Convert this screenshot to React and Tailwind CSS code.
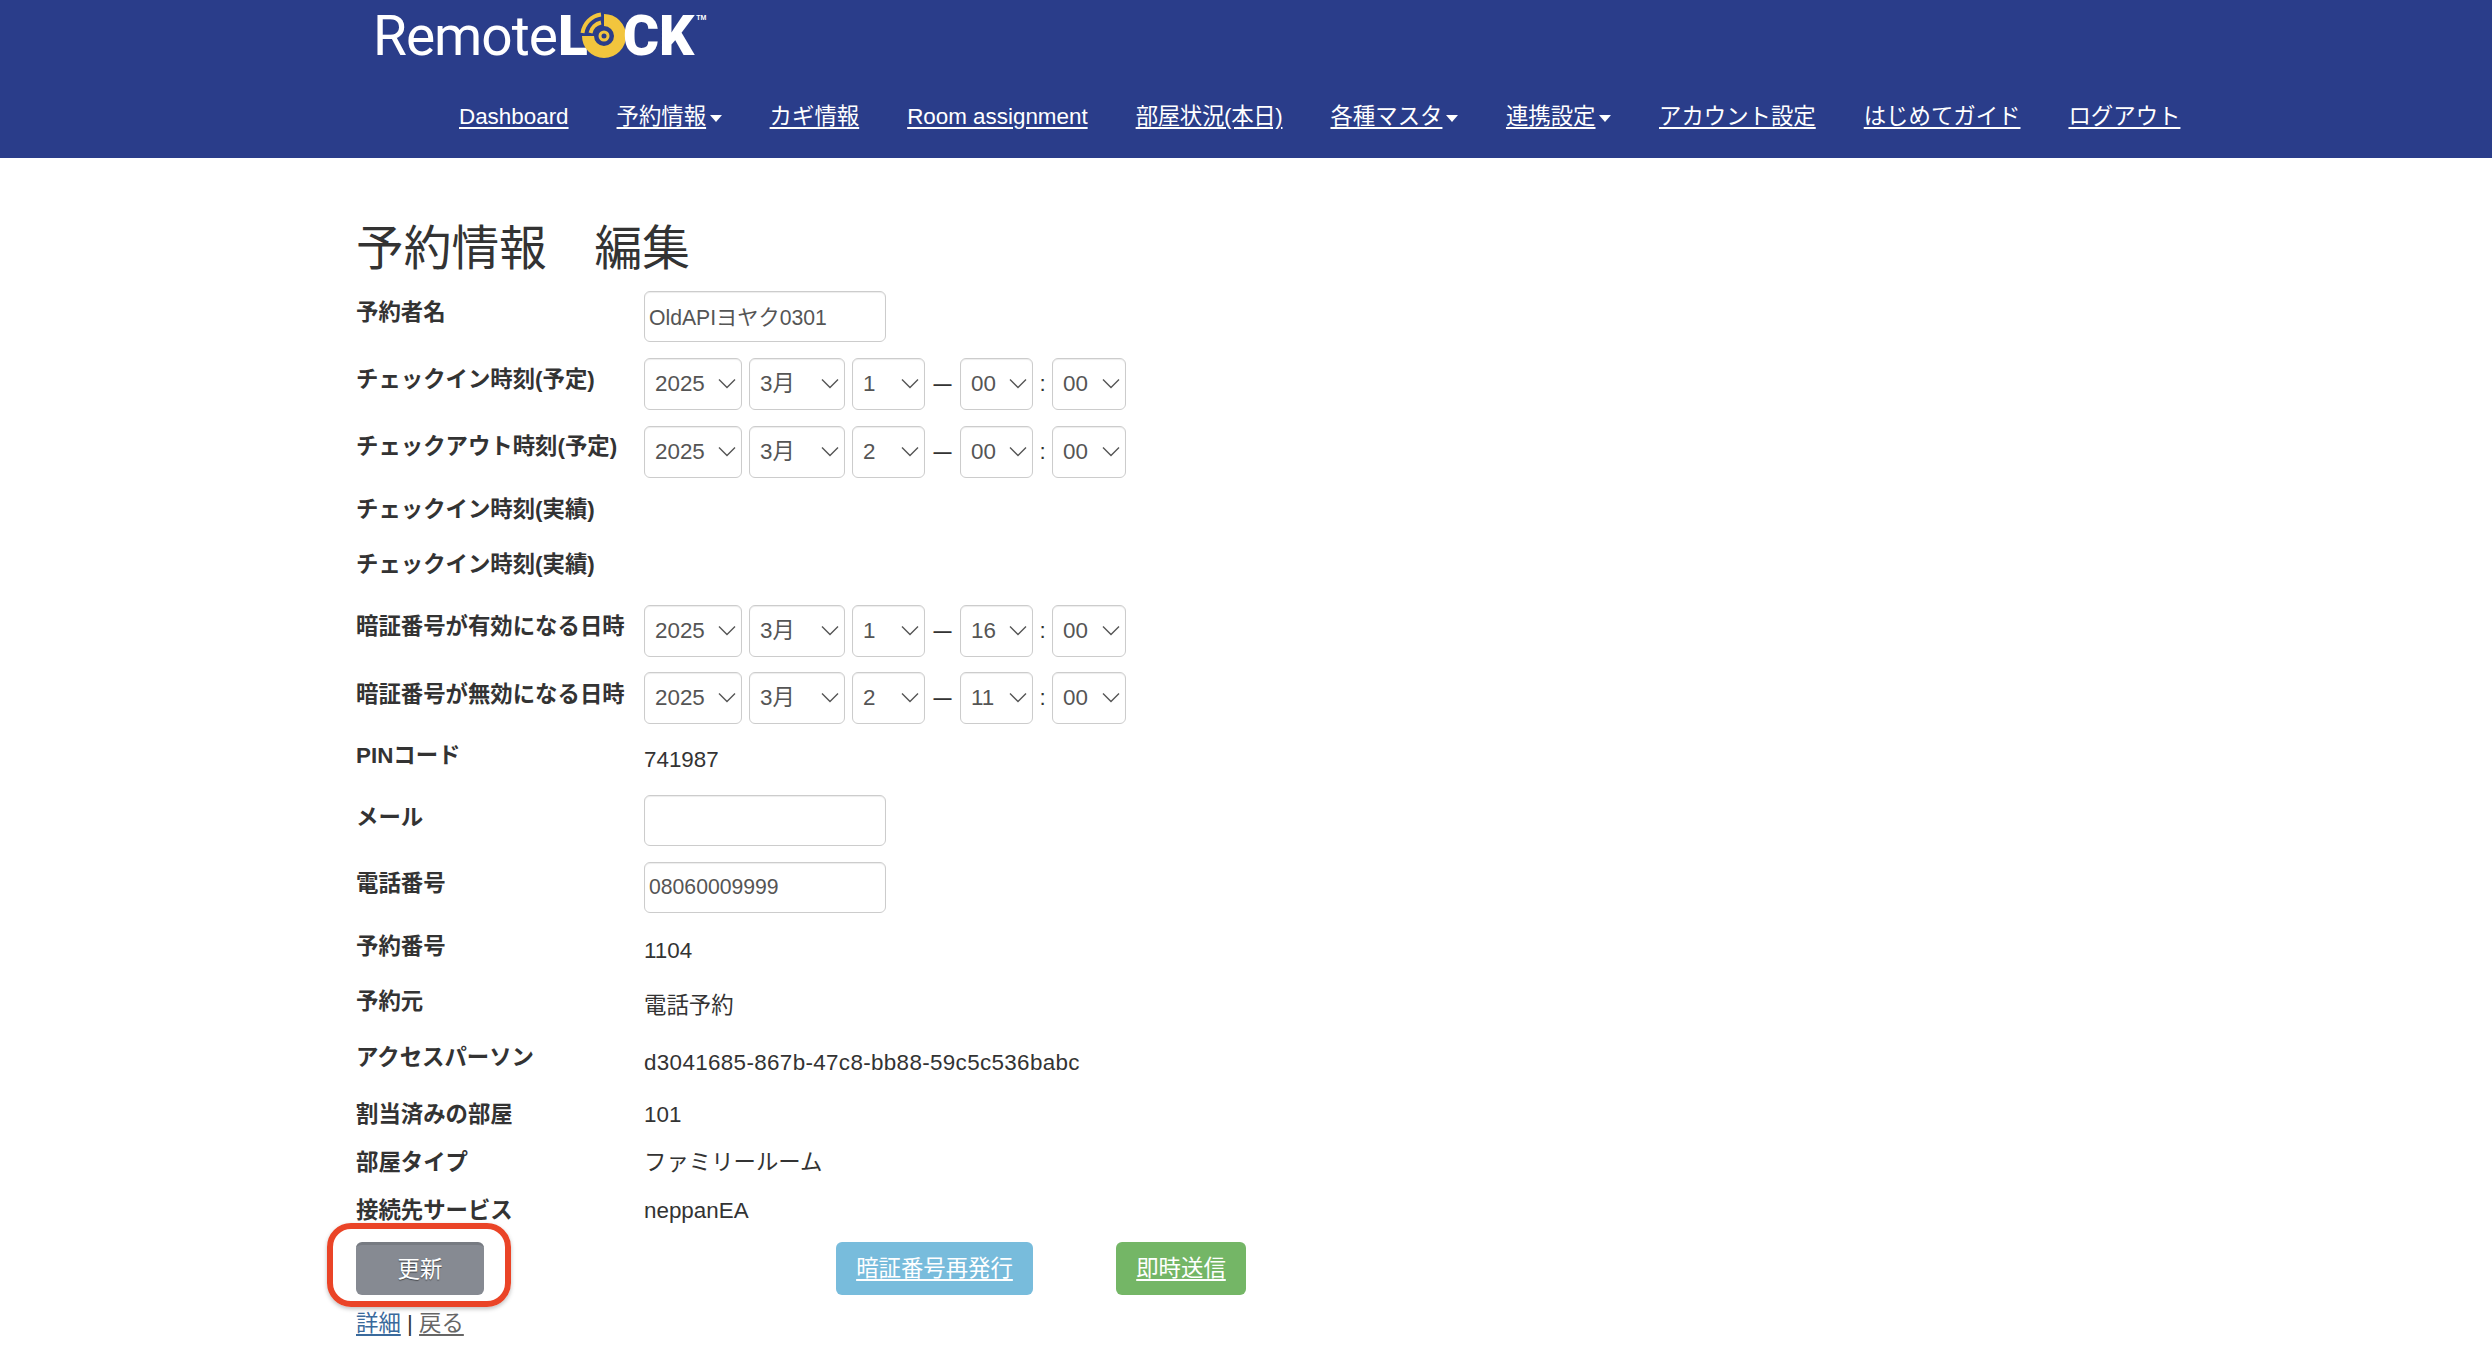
import React from "react";

const navItems = [
  { t: "Dashboard" },
  { t: "予約情報", c: true },
  { t: "カギ情報" },
  { t: "Room assignment" },
  { t: "部屋状況(本日)", k: "tracking-[-0.3px]" },
  { t: "各種マスタ", c: true },
  { t: "連携設定", c: true },
  { t: "アカウント設定" },
  { t: "はじめてガイド" },
  { t: "ログアウト" },
];

function Logo() {
  return (
    <div className="flex items-center h-[68px] pl-[373px] pt-[3px] text-white">
      <span className="[font-family:Roboto,sans-serif] text-[55px] leading-[68px] tracking-[-1px] font-normal w-[185px]">Remote</span>
      <span className="[font-family:Roboto,sans-serif] text-[55px] leading-[68px] font-black w-[21px]">L</span>
      <svg width="50" height="50" viewBox="0 0 50 50" className="shrink-0" fill="none" stroke="#f2c53d">
        <path d="M25 9A16 16 0 1 1 9 25" strokeWidth="12" />
        <path d="M3.5 22A21.5 21.5 0 0 1 22 3.5" strokeWidth="4" />
        <path d="M11.5 22A13.5 13.5 0 0 1 22 11.5" strokeWidth="4" />
        <circle cx="25" cy="25" r="4" strokeWidth="3" />
      </svg>
      <span className="[font-family:Roboto,sans-serif] text-[55px] leading-[68px] font-black -ml-[6px]">CK</span>
      <span className="self-start mt-[10px] ml-[2px] text-[7px] leading-[10px] font-bold">TM</span>
    </div>
  );
}

function Caret() {
  return <span className="inline-block ml-[3.5px] align-middle w-0 h-0 border-x-[6px] border-x-transparent border-t-[7px] border-t-white" />;
}

function Sel({ w, v }) {
  return (
    <div className={`relative h-[52px] ${w}`}>
      <select
        defaultValue={v}
        className="appearance-none w-full h-full bg-white border border-[#ccc] rounded-[6px] pl-[10px] text-[22.4px] text-[#555] shadow-[inset_0_1px_1px_rgba(0,0,0,0.075)]"
      >
        <option value={v}>{v}</option>
      </select>
      <svg className="absolute right-[6px] top-[20px] pointer-events-none" width="18" height="11" viewBox="0 0 18 11" fill="none" stroke="#555" strokeWidth="1.4">
        <path d="M1 1.5L9 9.5L17 1.5" />
      </svg>
    </div>
  );
}

function DateRow({ y, m, d, h, min }) {
  return (
    <div className="flex items-center text-[#333]">
      <Sel w="w-[98px]" v={y} />
      <div className="w-[7px]" />
      <Sel w="w-[96px]" v={m} />
      <div className="w-[7px]" />
      <Sel w="w-[73px]" v={d} />
      <span className="w-[35px] text-center text-[18px] font-bold">—</span>
      <Sel w="w-[73px]" v={h} />
      <span className="w-[19px] text-center text-[22.4px]">:</span>
      <Sel w="w-[74px]" v={min} />
    </div>
  );
}

function TextBox({ v }) {
  return (
    <input
      readOnly
      value={v}
      className="w-[242px] h-[51px] bg-white border border-[#ccc] rounded-[6px] px-[4px] pb-[2px] text-[21.2px] text-[#555] shadow-[inset_0_1px_1px_rgba(0,0,0,0.075)]"
    />
  );
}

function Label({ children, className = "" }) {
  return <div className={`w-[288px] shrink-0 font-bold leading-[32px] ${className}`}>{children}</div>;
}

export default function App() {
  return (
    <div className="h-[1346px] overflow-hidden bg-white text-[#333] text-[22.4px] [font-family:'Liberation_Sans','Noto_Sans_CJK_JP',sans-serif]">
      <header className="h-[158px] bg-[#2a3d8a]">
        <Logo />
        <nav className="flex gap-[48px] pl-[459px] pt-[32px] leading-[34px] text-white">
          {navItems.map((n) => (
            <span key={n.t} className="whitespace-nowrap">
              <a href="#" className={`underline underline-offset-[3px] ${n.k || ""}`}>{n.t}</a>
              {n.c && <Caret />}
            </span>
          ))}
        </nav>
      </header>

      <main className="pl-[356px]">
        <h1 className="mt-[61px] mb-[12px] text-[47.7px] leading-[60px] font-normal whitespace-pre">予約情報　編集</h1>

        <div className="flex h-[51px]">
          <Label className="pt-[6px] leading-[32px] box-content">予約者名</Label>
          <TextBox v="OldAPIヨヤク0301" />
        </div>
        <div className="flex mt-[16px]">
          <Label className="pt-[6px] box-content">チェックイン時刻(予定)</Label>
          <DateRow y="2025" m="3月" d="1" h="00" min="00" />
        </div>
        <div className="flex mt-[16px]">
          <Label className="pt-[5px] box-content">チェックアウト時刻(予定)</Label>
          <DateRow y="2025" m="3月" d="2" h="00" min="00" />
        </div>
        <div className="flex mt-[16px]">
          <Label>チェックイン時刻(実績)</Label>
        </div>
        <div className="flex mt-[23px]">
          <Label>チェックイン時刻(実績)</Label>
        </div>
        <div className="flex mt-[24px]">
          <Label className="pt-[6px] box-content">暗証番号が有効になる日時</Label>
          <DateRow y="2025" m="3月" d="1" h="16" min="00" />
        </div>
        <div className="flex mt-[15px]">
          <Label className="pt-[7px] box-content">暗証番号が無効になる日時</Label>
          <DateRow y="2025" m="3月" d="2" h="11" min="00" />
        </div>
        <div className="flex mt-[16px] h-[32px]">
          <Label>PINコード</Label>
          <div className="pt-[4px] leading-[32px]">741987</div>
        </div>
        <div className="flex mt-[23px] h-[51px]">
          <Label className="pt-[7px] box-content">メール</Label>
          <TextBox v="" />
        </div>
        <div className="flex mt-[16px] h-[51px]">
          <Label className="pt-[6px] box-content">電話番号</Label>
          <TextBox v="08060009999" />
        </div>
        <div className="flex mt-[18px] h-[32px]">
          <Label>予約番号</Label>
          <div className="pt-[4px] leading-[32px]">1104</div>
        </div>
        <div className="flex mt-[23px] h-[32px]">
          <Label>予約元</Label>
          <div className="pt-[4px] leading-[32px]">電話予約</div>
        </div>
        <div className="flex mt-[24px] h-[32px]">
          <Label>アクセスパーソン</Label>
          <div className="pt-[5px] leading-[32px] tracking-[0.35px]">d3041685-867b-47c8-bb88-59c5c536babc</div>
        </div>
        <div className="flex mt-[25px] h-[32px]">
          <Label>割当済みの部屋</Label>
          <div className="leading-[32px]">101</div>
        </div>
        <div className="flex mt-[16px] h-[32px]">
          <Label>部屋タイプ</Label>
          <div className="leading-[32px]">ファミリールーム</div>
        </div>
        <div className="flex mt-[16px] h-[32px]">
          <Label>接続先サービス</Label>
          <div className="leading-[32px]">neppanEA</div>
        </div>

        <div className="flex mt-[15px]">
          <div className="relative">
            <button className="w-[128px] h-[53px] rounded-[6px] bg-[#868a92] border-t-[3px] border-t-[#777b82] text-white [text-shadow:0_1px_1px_rgba(0,0,0,0.5)]">更新</button>
            <div className="absolute -left-[29px] -top-[19px] w-[184px] h-[84px] border-[6px] border-[#ea4427] rounded-[24px] shadow-[0_2px_4px_rgba(0,0,0,0.25)] pointer-events-none" />
          </div>
          <a href="#" className="ml-[352px] w-[197px] h-[53px] flex items-center justify-center rounded-[6px] bg-[#78bcdc] text-white underline underline-offset-[3px]">暗証番号再発行</a>
          <a href="#" className="ml-[83px] w-[130px] h-[53px] flex items-center justify-center rounded-[6px] bg-[#74b666] text-white underline underline-offset-[3px]">即時送信</a>
        </div>

        <div className="mt-[13px] leading-[32px]">
          <a href="#" className="text-[#3a6a9c] underline underline-offset-[3px]">詳細</a>
          <span> | </span>
          <a href="#" className="text-[#666] underline underline-offset-[3px]">戻る</a>
        </div>
      </main>
    </div>
  );
}
